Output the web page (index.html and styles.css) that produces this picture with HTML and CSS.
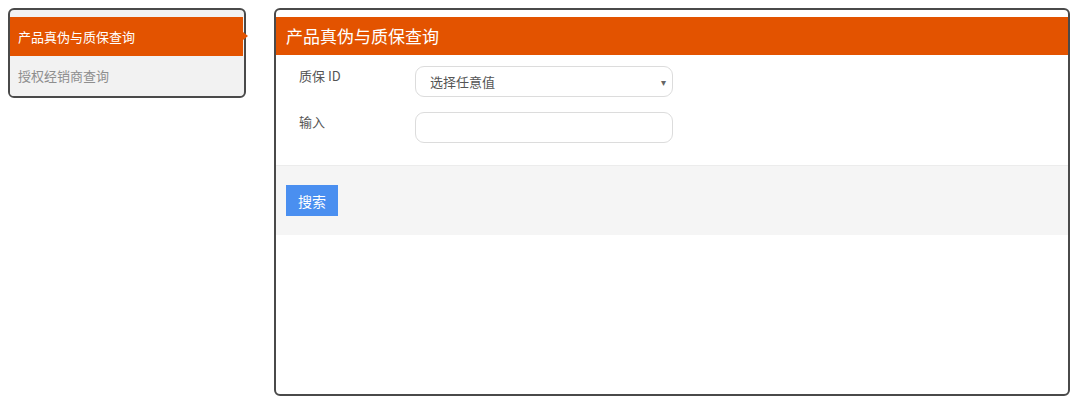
FILE: index.html
```html
<!DOCTYPE html>
<html lang="zh-CN">
<head>
    <meta charset="UTF-8">
    <meta name="viewport" content="width=device-width, initial-scale=1.0">
    <title>产品真伪与质保查询</title>
    <link rel="stylesheet" href="styles.css">
</head>
<body>
    <div class="page">
        <div class="sidebar">
            <div class="menuitem active">产品真伪与质保查询</div>
            <div class="menuitem">授权经销商查询</div>
        </div>
        <div class="panel">
            <div class="panelhead">产品真伪与质保查询</div>
            <div class="form">
                <div class="row">
                    <label class="label" for="warranty">质保 ID</label>
                    <div class="select" id="warranty">
                        <span>选择任意值</span>
                        <span class="caret">▾</span>
                    </div>
                </div>
                <div class="row">
                    <label class="label" for="query">输入</label>
                    <input class="field" id="query" type="text">
                </div>
            </div>
            <div class="actions">
                <button class="btn">搜索</button>
            </div>
        </div>
    </div>
</body>
</html>
```

FILE: styles.css
```css
body {
    margin: 8px 10px 0 8px;
    font-family: "Noto Sans CJK SC", "Noto Sans", sans-serif;
    background: #fff;
}
.page {
    display: flex;
    align-items: flex-start;
    gap: 28px;
}
.sidebar {
    box-sizing: border-box;
    width: 238px;
    border: 2px solid #4a4a4a;
    border-radius: 6px;
    padding: 7px 1px 0 0;
    background: #f2f2f2;
    flex-shrink: 0;
}
.menuitem {
    height: 40px;
    line-height: 40px;
    padding-left: 8px;
    font-size: 13px;
    color: #8e8e8e;
    background: #f2f2f2;
    border-bottom-left-radius: 4px;
    border-bottom-right-radius: 4px;
}
.menuitem.active {
    position: relative;
    height: 39px;
    line-height: 39px;
    color: #fff;
    background: #e35300;
    border-radius: 0;
}
.menuitem.active::after {
    content: "";
    position: absolute;
    right: -5px;
    top: 15px;
    border-left: 5px solid #e35300;
    border-top: 4px solid transparent;
    border-bottom: 4px solid transparent;
}
.panel {
    flex: 1;
    height: 377px;
    border: 2px solid #4a4a4a;
    border-radius: 6px;
    padding-top: 7px;
}
.panelhead {
    height: 38px;
    line-height: 38px;
    padding-left: 10px;
    font-size: 17px;
    color: #fff;
    background: #e35300;
}
.form {
    padding: 11px 0 22px 23px;
    display: flex;
    flex-direction: column;
    gap: 15px;
}
.row {
    display: flex;
    align-items: flex-start;
}
.label {
    width: 116px;
    font-size: 13px;
    color: #555;
    line-height: 20px;
}
.select, .field {
    box-sizing: border-box;
    width: 258px;
    height: 31px;
    border: 1px solid #dcdcdc;
    border-radius: 9px;
    background: #fff;
    font-family: inherit;
}
.select {
    display: flex;
    align-items: center;
    justify-content: space-between;
    padding: 0 6px 0 14px;
    font-size: 13px;
    color: #555;
}
.caret {
    font-size: 10px;
    color: #666;
}
.field {
    outline: none;
}
.actions {
    height: 70px;
    background: #f5f5f5;
    border-top: 1px solid #ececec;
    padding: 19px 0 0 10px;
    box-sizing: border-box;
}
.btn {
    width: 52px;
    height: 31px;
    border: none;
    background: #4a8ff0;
    color: #fff;
    font-size: 14px;
    font-family: "Noto Sans CJK SC", serif;
    padding: 0;
}
```
